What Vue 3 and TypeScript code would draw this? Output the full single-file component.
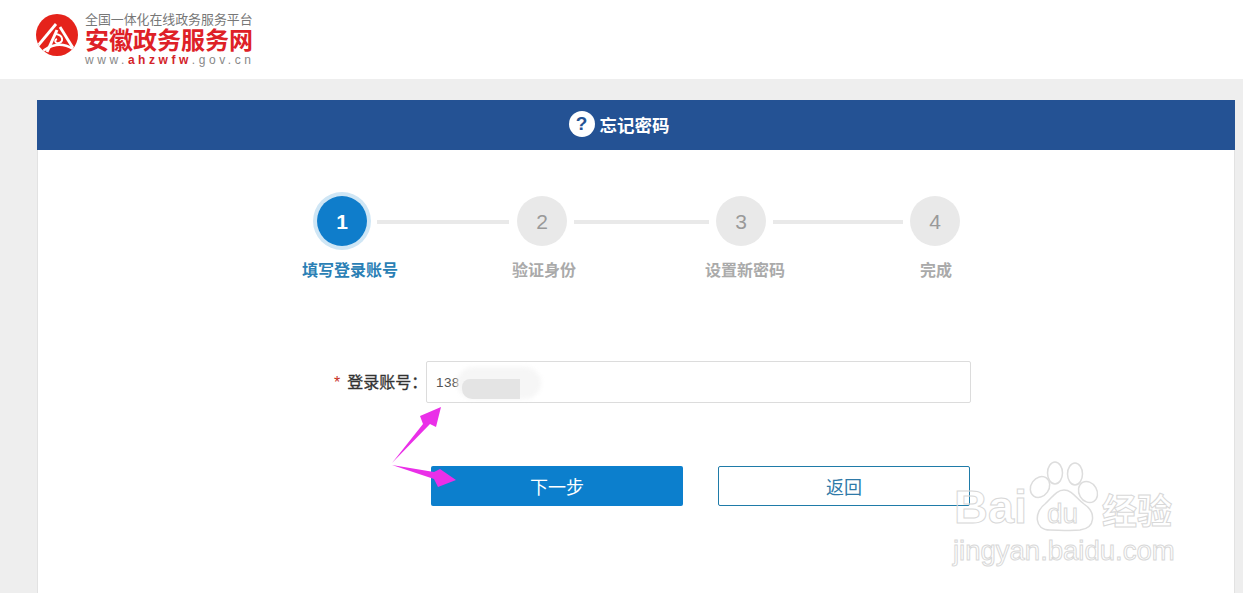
<script setup lang="ts">
const steps = [
  { no: 1, label: '填写登录账号' },
  { no: 2, label: '验证身份' },
  { no: 3, label: '设置新密码' },
  { no: 4, label: '完成' }
]
</script>

<template>
  <div class="page">
    <header class="top">
      <svg class="logo" viewBox="0 0 42 42" width="42" height="42">
        <defs>
          <clipPath id="logo-clip"><circle cx="21" cy="21" r="21" /></clipPath>
        </defs>
        <circle cx="21" cy="21" r="21" fill="#e5231b" />
        <g clip-path="url(#logo-clip)" fill="none" stroke="#fff">
          <path d="M0 34 L20 10" stroke-width="2.8" />
          <path d="M11 38 L21 16" stroke-width="3" />
          <path d="M24 13 L37 34" stroke-width="2.8" />
          <path d="M5 39 C14 30 26 28 37 35" stroke-width="2.4" />
          <path d="M20 20 C27 21 28 28 23 29 C19 30 18 26 21 25" stroke-width="2" />
        </g>
      </svg>
      <div class="brand">
        <div class="brand-sub">全国一体化在线政务服务平台</div>
        <div class="brand-name">安徽政务服务网</div>
        <div class="brand-url">www.<b>ahzwfw</b>.gov.cn</div>
      </div>
    </header>

    <main class="card">
      <div class="card-head">
        <span class="q">?</span>
        <span>忘记密码</span>
      </div>

      <div class="steps">
        <template v-for="(s, i) in steps" :key="s.no">
          <div class="dot" :class="{ on: i === 0 }">{{ s.no }}</div>
          <div v-if="i < 3" class="line" :class="'l' + i"></div>
        </template>
      </div>
      <div class="labels">
        <div v-for="(s, i) in steps" :key="s.no" class="lab" :class="{ on: i === 0 }">{{ s.label }}</div>
      </div>

      <div class="field">
        <label><i>*</i>登录账号：</label>
        <div class="input-wrap">
          <input type="text" value="138" />
          <span class="smudge"></span>
          <span class="smudge2"></span>
        </div>
      </div>

      <div class="btns">
        <button class="btn primary">下一步</button>
        <button class="btn ghost">返回</button>
      </div>
    </main>

    <svg class="arrows" width="120" height="130" viewBox="0 0 120 130">
      <path d="M2 60 L33 21 L30 13 L51 4 L46 24 L40 21 Z" fill="#ea2fe8" />
      <path d="M2 62 L44 69 L50 66 L66 77 L48 84 L44 76 Z" fill="#ea2fe8" />
    </svg>

    <div class="mark">
      <svg class="paw" width="74" height="76" viewBox="0 0 74 76">
        <g fill="#fff" stroke="#ddd" stroke-width="1.5">
          <ellipse cx="12" cy="27" rx="9" ry="11" transform="rotate(35 12 27)" />
          <ellipse cx="27" cy="13" rx="7.5" ry="11" />
          <ellipse cx="47" cy="14" rx="7.5" ry="11" />
          <ellipse cx="60" cy="32" rx="9" ry="11" transform="rotate(-30 60 32)" />
          <path d="M36 30 C28 30 24 38 17 44 C6 52 6 70 22 70 C30 70 42 71 52 70 C68 68 68 52 56 44 C48 38 44 30 36 30 Z" />
        </g>
      </svg>
      <span class="bai">Bai</span>
      <span class="du">du</span>
      <span class="jy">经验</span>
      <div class="mark-url">jingyan.baidu.com</div>
    </div>
  </div>
</template>

<style>
html, body {
  margin: 0;
  background: #eee;
  overflow: hidden;
}
</style>

<style scoped>
.page {
  position: relative;
  height: 593px;
  overflow: hidden;
  background: #eee;
  font-family: "Liberation Sans", "Noto Sans CJK SC", sans-serif;
}

.top {
  display: flex;
  align-items: flex-start;
  gap: 7px;
  height: 79px;
  padding: 13px 0 0 36px;
  background: #fff;
  box-sizing: border-box;
}

.logo {
  margin-top: 1px;
}

.brand {
  width: 170px;
}

.brand-sub {
  font-size: 12.9px;
  line-height: 14px;
  color: #777;
  white-space: nowrap;
}

.brand-name {
  margin-top: 2px;
  font-size: 24px;
  line-height: 24px;
  font-weight: 700;
  color: #de2127;
  white-space: nowrap;
}

.brand-url {
  font-size: 12px;
  line-height: 14px;
  letter-spacing: 3.55px;
  color: #888;
  white-space: nowrap;
}

.brand-url b {
  color: #d3242a;
}

.card {
  width: 1198px;
  height: 520px;
  margin: 21px 0 0 37px;
  box-sizing: border-box;
  background: #fff;
  border: 1px solid #e2e2e2;
  border-top: 0;
}

.card-head {
  display: flex;
  align-items: center;
  justify-content: center;
  gap: 5px;
  height: 50px;
  margin: 0 -1px;
  padding: 0 34px 2px 0;
  box-sizing: border-box;
  background: #245294;
  color: #fff;
  font-size: 17.5px;
  font-weight: 700;
}

.q {
  width: 26px;
  height: 26px;
  border-radius: 50%;
  background: #fff;
  color: #245294;
  font-size: 19px;
  line-height: 26px;
  text-align: center;
}

.steps {
  display: flex;
  align-items: center;
  margin: 46px 0 0 279px;
}

.dot {
  width: 50px;
  height: 50px;
  border-radius: 50%;
  background: #e9e9e9;
  color: #999;
  font-size: 21px;
  line-height: 52px;
  text-align: center;
  flex: none;
}

.dot.on {
  background: #0f7dcb;
  color: #fff;
  font-weight: 700;
  box-shadow: 0 0 0 4px #cfe6f5;
}

.line {
  height: 4px;
  background: #e9e9e9;
  margin: 2px 7px 0;
}

.l0 { width: 132px; margin-left: 10px; margin-right: 8px; }
.l1 { width: 135px; }
.l2 { width: 130px; }

.labels {
  display: flex;
  margin: 13px 0 0 252px;
}

.lab {
  width: 120px;
  text-align: center;
  font-size: 16px;
  line-height: 24px;
  font-weight: 700;
  color: #aaa;
}

.lab + .lab { margin-left: 74px; }
.lab:nth-child(3) { margin-left: 81px; }
.lab:nth-child(4) { margin-left: 71px; }
.lab.on { color: #2b7fb5; }

.field {
  display: flex;
  align-items: center;
  margin: 78px 0 0 296px;
}

.field label {
  width: 92px;
  margin-bottom: 3px;
  font-size: 16px;
  color: #333;
  white-space: nowrap;
  -webkit-text-stroke: 0.3px #333;
}

.field i {
  margin-right: 7px;
  color: #c7321f;
  font-style: normal;
  -webkit-text-stroke: 0;
}

.input-wrap {
  position: relative;
  width: 545px;
  height: 42px;
}

.input-wrap input {
  width: 100%;
  height: 100%;
  box-sizing: border-box;
  border: 1px solid #dcdcdc;
  border-radius: 2px;
  padding: 0 9px;
  font-family: inherit;
  font-size: 13.5px;
  letter-spacing: 0.4px;
  color: #555;
  outline: none;
}

.smudge {
  position: absolute;
  left: 31px;
  top: 6px;
  width: 84px;
  height: 32px;
  border-radius: 16px;
  background: #f6f6f6;
  filter: blur(2px);
}

.smudge2 {
  position: absolute;
  left: 36px;
  top: 18px;
  width: 58px;
  height: 20px;
  background: #e4e4e4;
  border-radius: 8px 0 0 10px;
}

.btns {
  display: flex;
  gap: 35px;
  margin: 63px 0 0 393px;
}

.btn {
  width: 252px;
  height: 40px;
  box-sizing: border-box;
  border-radius: 2px;
  font-family: inherit;
  font-size: 18px;
  padding: 0;
}

.primary {
  background: #0c7fcd;
  border: 0;
  color: #fff;
}

.ghost {
  background: #fff;
  border: 1px solid #1f7ba8;
  color: #2f7aa8;
}

.arrows {
  position: absolute;
  left: 390px;
  top: 403px;
}

.mark {
  position: absolute;
  left: 950px;
  top: 458px;
  width: 230px;
  height: 110px;
  pointer-events: none;
  white-space: nowrap;
  color: transparent;
  -webkit-text-stroke: 1px #d8d8d8;
}

.paw {
  position: absolute;
  left: 78px;
  top: 2px;
}

.bai {
  position: absolute;
  left: 4px;
  top: 22px;
  font-size: 47px;
  line-height: 54px;
  font-weight: 700;
}

.du {
  position: absolute;
  left: 97px;
  top: 41px;
  font-size: 28px;
  line-height: 30px;
}

.jy {
  position: absolute;
  left: 152px;
  top: 32px;
  font-size: 35px;
  line-height: 44px;
  font-weight: 700;
}

.mark-url {
  position: absolute;
  left: 3px;
  top: 78px;
  font-size: 27.5px;
  line-height: 30px;
}
</style>
